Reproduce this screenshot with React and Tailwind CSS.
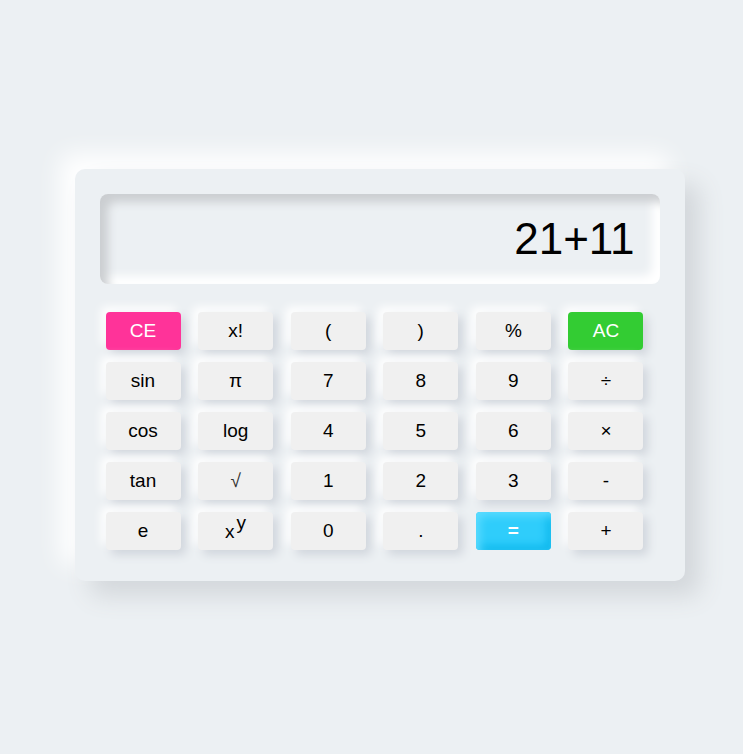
import React, { useState } from 'react';

const keys = [
  ['CE', 'x!', '(', ')', '%', 'AC'],
  ['sin', 'π', '7', '8', '9', '÷'],
  ['cos', 'log', '4', '5', '6', '×'],
  ['tan', '√', '1', '2', '3', '-'],
  ['e', 'xy', '0', '.', '=', '+'],
];

function Key({ label }) {
  let tone = 'bg-[#f0f0f0] text-black shadow-[5px_5px_10px_#d1d6dd,-5px_-5px_10px_#ffffff]';
  if (label === 'CE') tone = 'bg-[#ff3399] text-white shadow-[5px_5px_10px_#d1d6dd,-5px_-5px_10px_#ffffff]';
  if (label === 'AC') tone = 'bg-[#33cc33] text-white shadow-[5px_5px_10px_#d1d6dd,-5px_-5px_10px_#ffffff]';
  if (label === '=')
    tone = 'bg-[#2fcdfb] text-white font-bold shadow-[inset_4px_4px_8px_#5ddcff,inset_-4px_-4px_8px_#0bb6ec]';

  return (
    <button className={`h-[38px] w-[75px] rounded-[4px] text-[19px] leading-none pb-[2px] flex items-center justify-center ${tone}`}>
      {label === 'xy' ? (
        <span className="relative top-[1px]">
          x<span className="relative -top-[9px] ml-[2px]">y</span>
        </span>
      ) : label === '√' ? (
        <span className="text-[#333] font-light">√</span>
      ) : (
        label
      )}
    </button>
  );
}

export default function App() {
  const [expr] = useState('21+11');

  return (
    <div className="min-h-[754px] w-full bg-[#ecf0f3] flex items-center justify-center pl-[16px] pb-[4px] font-['Liberation_Sans',Arial,sans-serif]">
      <div className="w-[610px] h-[412px] rounded-[10px] bg-[#ecf0f3] px-[25px] pt-[25px] shadow-[15px_15px_25px_#d3d7db,-15px_-15px_25px_#ffffff]">
        <div className="h-[90px] rounded-[8px] bg-[#ecf0f3] flex items-center justify-end pr-[25px] shadow-[inset_8px_8px_10px_#cbced1,inset_-8px_-8px_10px_#ffffff]">
          <span className="text-[44px] leading-none text-black">{expr}</span>
        </div>

        <div className="mt-[28px] pl-[6px] grid grid-cols-[repeat(6,75px)] gap-x-[17.6px] gap-y-[12px]">
          {keys.flat().map((k, i) => (
            <Key key={i} label={k} />
          ))}
        </div>
      </div>
    </div>
  );
}
